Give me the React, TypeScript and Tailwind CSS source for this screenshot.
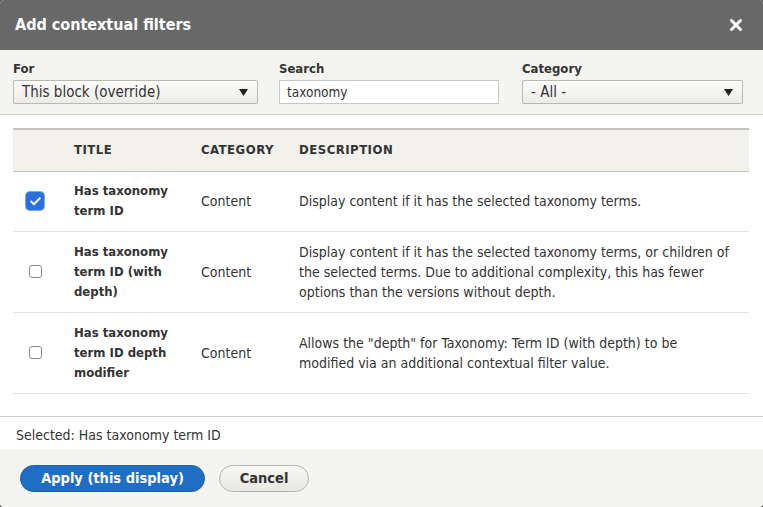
import { Check } from 'lucide-react'

const rows = [
  {
    title: ['Has taxonomy', 'term ID'],
    category: 'Content',
    description: ['Display content if it has the selected taxonomy terms.'],
    checked: true,
    h: 'h-[60px]',
  },
  {
    title: ['Has taxonomy', 'term ID (with', 'depth)'],
    category: 'Content',
    description: [
      'Display content if it has the selected taxonomy terms, or children of',
      'the selected terms. Due to additional complexity, this has fewer',
      'options than the versions without depth.',
    ],
    checked: false,
    h: 'h-[81px]',
  },
  {
    title: ['Has taxonomy', 'term ID depth', 'modifier'],
    category: 'Content',
    description: [
      'Allows the "depth" for Taxonomy: Term ID (with depth) to be',
      'modified via an additional contextual filter value.',
    ],
    checked: false,
    h: 'h-[81px]',
  },
]

function SelectBox({ value, className }: { value: string; className: string }) {
  return (
    <div
      className={`flex h-[24px] items-center justify-between rounded-[2px] border border-[#b9b9b4] bg-gradient-to-b from-[#fdfdfc] to-[#ecebe6] pl-[8px] pr-[9px] text-[15px] text-[#333] ${className}`}
    >
      <span>{value}</span>
      <svg width="9" height="7" viewBox="0 0 9 7">
        <path d="M0 0 H9 L4.5 7 Z" fill="#222" />
      </svg>
    </div>
  )
}

export default function App() {
  return (
    <div
      className="min-h-screen bg-[#4a4a4a] text-[#333]"
      style={{ fontFamily: '"DejaVu Sans Condensed", "DejaVu Sans", "Open Sans", sans-serif' }}
    >
      <div className="flex h-[507px] w-[763px] flex-col overflow-hidden rounded-[4px] bg-white">
        {/* Title bar */}
        <div className="flex h-[50px] shrink-0 items-center justify-between bg-[#686868] pl-[15px] pr-[21px]">
          <h1 className="text-[16px] font-bold text-white">Add contextual filters</h1>
          <svg width="12" height="12" viewBox="0 0 12 12">
            <path d="M1.5 1.5 L10.5 10.5 M10.5 1.5 L1.5 10.5" stroke="#fff" strokeWidth="3" strokeLinecap="round" />
          </svg>
        </div>

        {/* Filters */}
        <div className="flex h-[65px] shrink-0 gap-[21px] border-b border-[#cdcdc8] bg-[#f4f4f1] px-[13px] pt-[10px]">
          <div className="flex w-[245px] flex-col gap-[2px]">
            <label className="text-[13px] leading-[18px] font-bold">For</label>
            <SelectBox value="This block (override)" className="w-[245px]" />
          </div>
          <div className="flex w-[220px] flex-col gap-[2px]">
            <label className="text-[13px] leading-[18px] font-bold">Search</label>
            <div className="flex h-[24px] items-center border border-[#c8c8c3] bg-white px-[7px] text-[13.5px]">taxonomy</div>
          </div>
          <div className="ml-[2px] flex w-[221px] flex-col gap-[2px]">
            <label className="text-[13px] leading-[18px] font-bold">Category</label>
            <SelectBox value="- All -" className="w-[221px]" />
          </div>
        </div>

        {/* Table */}
        <div className="flex-1 pt-[13px] pl-[13px] pr-[14px]">
          <table className="w-full table-fixed border-collapse text-[14px] leading-[20px]">
            <thead>
              <tr className="h-[42px] border-t-2 border-b border-t-[#c4c3be] border-b-[#c4c3be] bg-[#f2f1ec]">
                <th className="w-[49px]" />
                <th className="w-[127px] pl-[12px] text-left text-[13px] font-bold tracking-[0.5px]">TITLE</th>
                <th className="w-[98px] pl-[12px] text-left text-[13px] font-bold tracking-[0.5px]">CATEGORY</th>
                <th className="pl-[12px] text-left text-[13px] font-bold tracking-[0.5px]">DESCRIPTION</th>
              </tr>
            </thead>
            <tbody>
              {rows.map((row) => (
                <tr key={row.title.join(' ')} className={`${row.h} border-b border-[#e4e4e1]`}>
                  <td className="pl-[14px]">
                    {row.checked ? (
                      <div className="ml-[-1px] flex h-[18px] w-[18px] items-center justify-center rounded-[4px] bg-[#2a6fe0] ring-1 ring-[#7aa6ef]">
                        <Check className="h-[13px] w-[13px] text-white" strokeWidth={3.5} />
                      </div>
                    ) : (
                      <div className="ml-[2px] h-[13px] w-[13px] rounded-[3px] border border-[#8a8a8a] bg-white" />
                    )}
                  </td>
                  <td className="pl-[12px] text-[13px] font-bold whitespace-nowrap">
                    {row.title.map((t) => (
                      <div key={t}>{t}</div>
                    ))}
                  </td>
                  <td className="pl-[12px]">{row.category}</td>
                  <td className="pl-[12px] whitespace-nowrap">
                    {row.description.map((d) => (
                      <div key={d}>{d}</div>
                    ))}
                  </td>
                </tr>
              ))}
            </tbody>
          </table>
        </div>

        {/* Selected */}
        <div className="h-[33px] shrink-0 border-t border-[#cdcdc8] bg-white pl-[16px] pt-[9px] text-[14px] leading-[18px]">
          Selected: Has taxonomy term ID
        </div>

        {/* Buttons */}
        <div className="flex h-[58px] shrink-0 items-start gap-[14px] bg-[#f4f4f1] pl-[20px] pt-[16px]">
          <button className="h-[27px] w-[185px] rounded-full border border-[#1a5ea8] bg-[#1f6ec4] text-[14.5px] font-bold text-white">
            Apply (this display)
          </button>
          <button className="h-[27px] w-[90px] rounded-full border border-[#b4b3ae] bg-gradient-to-b from-[#f7f7f4] to-[#e9e8e3] text-[14.5px] font-bold text-[#333]">
            Cancel
          </button>
        </div>
      </div>
    </div>
  )
}
